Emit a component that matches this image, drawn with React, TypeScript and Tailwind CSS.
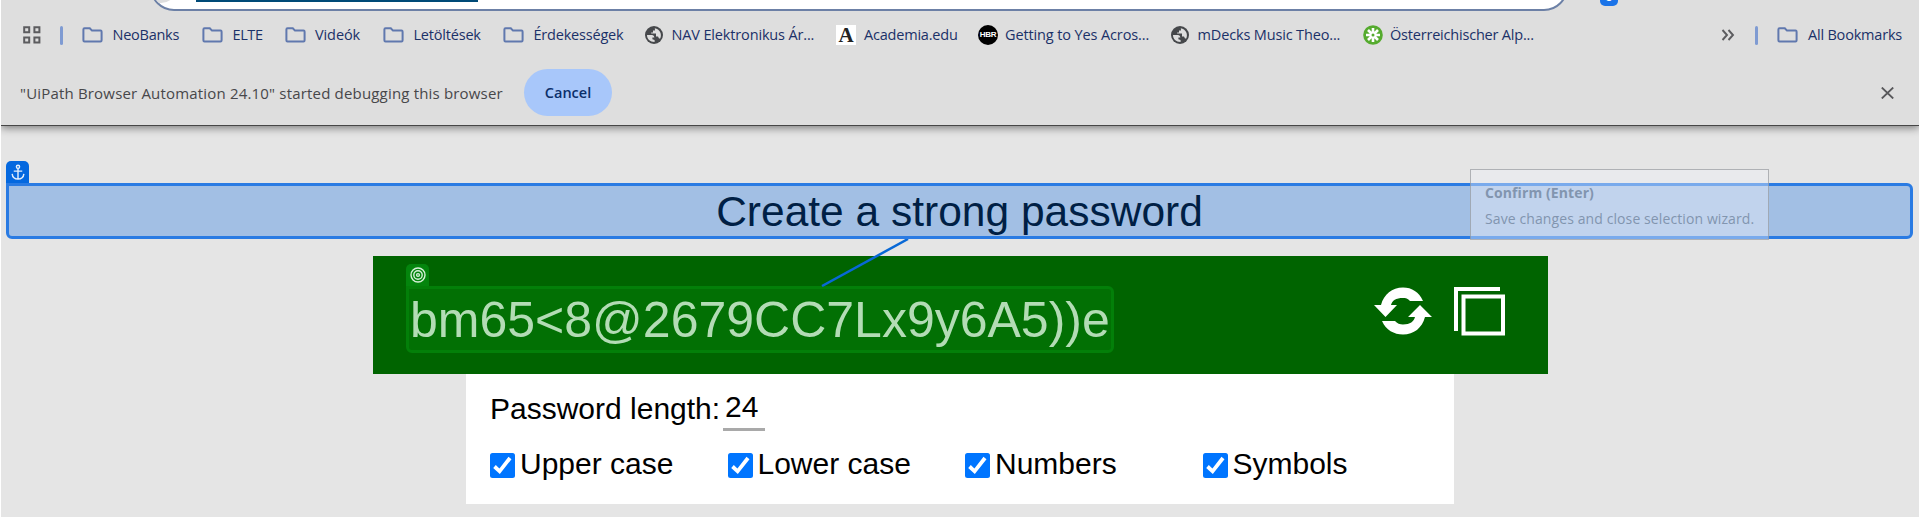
import React from "react";

const Folder = () => (
  <svg viewBox="0 0 21 16" className="h-4 w-[21px] shrink-0" fill="none" stroke="#6078ae" strokeWidth="2">
    <path d="M2.5 1.2H7.8L10 3.6H18.5Q19.6 3.6 19.6 4.7V13.2Q19.6 14.4 18.5 14.4H2.5Q1.4 14.4 1.4 13.2V2.4Q1.4 1.2 2.5 1.2Z" />
  </svg>
);

const Globe = () => (
  <svg viewBox="0 0 18 18" className="h-[18px] w-[18px] shrink-0">
    <circle cx="9" cy="9" r="9" fill="#46484b" />
    <path d="M2 9H7.2Q9.2 9 9.4 11.6H7.4V13.2L9.6 14V16C5 16 2 13 2 9Z" fill="#dedede" />
    <path d="M9.8 2.2L10 4.6H8V6.4H6.2V7.6H11V10.4H13L14 12.6H15.2C17.4 8 14.6 3 9.8 2.2Z" fill="#dedede" />
  </svg>
);

const Academia = () => (
  <span className="flex h-5 w-5 items-center justify-center bg-white font-['Liberation_Serif',serif] text-[21px] leading-5 font-bold text-[#222]">A</span>
);

const Hbr = () => (
  <span className="flex h-5 w-5 items-center justify-center rounded-full bg-black font-['Liberation_Sans',sans-serif] text-[8px] leading-5 font-bold tracking-[-0.3px] text-white">HBR</span>
);

const Alpine = () => (
  <svg viewBox="0 0 20 20" className="h-5 w-5">
    <circle cx="10" cy="10" r="9.8" fill="#55ab2e" />
    <path d="M10 3V17M3 10H17M5 5L15 15M15 5L5 15" stroke="#fff" strokeWidth="2.6" />
    <circle cx="10" cy="10" r="1.5" fill="#55ab2e" />
  </svg>
);

function Mark({ icon, box, label, children }: { icon: React.ReactNode; box: string; label: string; children: React.ReactNode }) {
  return (
    <div className={`flex shrink-0 items-center ${box}`}>
      {icon}
      <span className={`whitespace-nowrap ${label}`}>{children}</span>
    </div>
  );
}

function Check({ label }: { label: string }) {
  return (
    <label className="flex w-[237.5px] items-center">
      <svg viewBox="0 0 25 25" className="h-[25px] w-[25px]">
        <rect width="25" height="25" rx="2.5" fill="#0075ff" />
        <path d="M4.5 13.5L9.6 18.3L20 5" fill="none" stroke="#fff" strokeWidth="3.8" />
      </svg>
      <span className="-mt-1 ml-[5px] whitespace-nowrap">{label}</span>
    </label>
  );
}

export default function App() {
  return (
    <div className="relative flex h-[517px] w-[1920px] flex-col overflow-hidden border-x border-white bg-[#e5e5e5] font-['Liberation_Sans',Arial,sans-serif]">
      <header className="h-[126px] shrink-0 border-b border-[#464646] bg-[#dedede] font-['Open_Sans','Noto_Sans',sans-serif] text-[14.5px] text-[#1b3168] shadow-[0_2px_8px_#0007]">
        <div className="flex h-[11px] items-end">
          <div className="ml-[149px] flex h-12 w-[1418px] items-end overflow-hidden rounded-full border-2 border-[#6c80a6] bg-white">
            <div className="mb-[6px] -ml-[7px] h-8 w-8 rounded-full bg-[#dedede]" />
            <div className="mb-[7px] ml-[19px] h-5 w-[282px] bg-[#004a77]" />
          </div>
          <div className="mb-[5px] ml-8 flex h-5 w-[18px] items-end justify-center rounded-[5px] bg-[#1a73e8] text-[13px] leading-[19px] font-bold text-white">0</div>
        </div>
        <nav className="flex h-12 items-center">
          <svg viewBox="0 0 18 18" className="ml-[22px] h-[18px] w-[18px] shrink-0" fill="none" stroke="#5c5c5f" strokeWidth="2">
            <path d="M1.2 1.2H6.2V6.2H1.2ZM11.4 1.2H16.4V6.2H11.4ZM1.2 11.4H6.2V16.4H1.2ZM11.4 11.4H16.4V16.4H11.4Z" />
          </svg>
          <i className="ml-[19px] h-[19px] w-[3px] rounded bg-[#7f9bd2]" />
          <Mark icon={<Folder />} box="ml-[19px] w-[120px]" label="ml-[9.5px] tracking-[-0.25px]">NeoBanks</Mark>
          <Mark icon={<Folder />} box="w-[83px]" label="ml-[9.5px] tracking-[-0.4px]">ELTE</Mark>
          <Mark icon={<Folder />} box="w-[98px]" label="ml-[9px] tracking-[-0.1px]">Videók</Mark>
          <Mark icon={<Folder />} box="w-[120px]" label="ml-[9.5px] tracking-[-0.2px]">Letöltések</Mark>
          <Mark icon={<Folder />} box="w-[142px]" label="ml-[9.5px] tracking-[-0.2px]">Érdekességek</Mark>
          <Mark icon={<Globe />} box="w-[191px]" label="ml-[8.5px] tracking-[-0.15px]">NAV Elektronikus Ár...</Mark>
          <Mark icon={<Academia />} box="w-[142px]" label="ml-[8px] tracking-[-0.2px]">Academia.edu</Mark>
          <Mark icon={<Hbr />} box="w-[193px]" label="ml-[7px] tracking-[-0.12px]">Getting to Yes Acros...</Mark>
          <Mark icon={<Globe />} box="w-[192px]" label="ml-[8.5px] tracking-[-0.15px]">mDecks Music Theo...</Mark>
          <Mark icon={<Alpine />} box="w-[358px]" label="ml-[7px] tracking-[-0.2px]">Österreichischer Alp...</Mark>
          <svg viewBox="0 0 14 12" className="h-3 w-[14px] shrink-0" fill="none" stroke="#5c5c5f" strokeWidth="1.9">
            <path d="M1.5 1L6 6L1.5 11M7.5 1L12 6L7.5 11" />
          </svg>
          <i className="ml-5 h-[19px] w-[3px] rounded bg-[#7f9bd2]" />
          <Mark icon={<Folder />} box="ml-[19px]" label="ml-[10px] tracking-[-0.2px]">All Bookmarks</Mark>
        </nav>
        <div className="flex h-[66px] items-center text-[#47474a]">
          <span className="mt-[2px] ml-[19px] w-[504px] text-[15px] tracking-[0.18px] whitespace-nowrap">"UiPath Browser Automation 24.10" started debugging this browser</span>
          <button className="h-[47px] w-[88px] rounded-full bg-[#a8c7fa] pt-[2px] font-semibold text-[#0b2f6b]">Cancel</button>
          <svg viewBox="0 0 13 12" className="mt-px ml-[1269px] h-3 w-[13px] shrink-0" stroke="#58585b" strokeWidth="1.8">
            <path d="M.8 .5L12.2 11.5M12.2 .5L.8 11.5" />
          </svg>
        </div>
      </header>

      <main className="flex flex-col">
        <div className="mt-[35px] ml-[5px] flex h-[22px] w-[23px] items-center justify-center rounded-t-[5px] bg-[#0468df]">
          <svg viewBox="0 0 16 18" className="h-[17px] w-4" fill="none" stroke="#e2eefc" strokeWidth="1.5">
            <circle cx="8" cy="3" r="1.7" />
            <path d="M8 5V16M3.5 7.5H12.5M1.8 10.5Q2.4 16 8 16Q13.6 16 14.2 10.5" />
          </svg>
        </div>
        <h1 className="ml-[5px] flex h-[56px] w-[1907px] items-center justify-center rounded-md rounded-tl-none border-[3px] border-[#2a7be3] bg-[#a2bfe4] pt-[2px] text-[42.5px] whitespace-nowrap text-[#001f45]">Create a strong password</h1>
        <section className="mt-[17px] ml-[372px] flex h-[118px] w-[1175px] bg-[#006400]">
          <div className="ml-[33px] flex flex-col">
            <div className="mt-2 flex h-[22px] w-[23px] items-center justify-center rounded-t-[5px] bg-[#04850d]">
              <svg viewBox="0 0 16 16" className="h-4 w-4" fill="none" stroke="#d6f0d8" strokeWidth="1.4">
                <circle cx="8" cy="8" r="7" />
                <circle cx="8" cy="8" r="4.2" />
                <circle cx="8" cy="8" r="1.4" />
              </svg>
            </div>
            <div className="flex h-[67px] w-[708px] items-center rounded-md rounded-tl-none border-[3px] border-[#037f09] bg-[#027004] pt-[2px] pl-[1px] text-[50px] whitespace-nowrap text-[#b3dcb5]">{"bm65<8@2679CC7Lx9y6A5))e"}</div>
          </div>
          <svg viewBox="0 0 58 48" className="mt-[31px] ml-[260px] h-[48px] w-[58px]" fill="#fff">
            <path d="M7 18C10 7 18 0.5 29 0.5C38 0.5 45 5 49 14H36C34 11.5 31.5 11 29 11C22 11 18 13.5 17 18H23L11.5 30L0 18Z" />
            <path d="M51 30C48 41 40 47.5 29 47.5C20 47.5 12 43 8 34H21C23 36.5 26 37.5 29 37.5C36 37.5 40 34.5 41 30H34L46 18L58 30Z" />
          </svg>
          <svg viewBox="0 0 52 49" className="mt-[31px] ml-[22px] h-[49px] w-[52px]" fill="none" stroke="#fff" strokeWidth="4">
            <path d="M46 2H2V44" />
            <path d="M9.5 9.5H49V46.5H9.5Z" />
          </svg>
        </section>
        <section className="ml-[465px] h-[130px] w-[988px] bg-white pl-6 text-[30px] text-black">
          <div className="flex h-[57px] items-end">
            <span className="h-[45px] w-[233px] whitespace-nowrap">Password length:</span>
            <span className="h-[47px] w-[42px] border-b-[3px] border-[#a9a9a9] pl-[2px]">24</span>
          </div>
          <div className="mt-[14px] flex">
            <Check label="Upper case" />
            <Check label="Lower case" />
            <Check label="Numbers" />
            <Check label="Symbols" />
          </div>
        </section>
      </main>

      <svg viewBox="0 0 88 48" className="absolute top-[239px] left-[820px] h-12 w-[88px]">
        <path d="M1 47L87 0" stroke="#0868d6" strokeWidth="2.5" />
      </svg>
      <aside className="absolute top-[169px] left-[1469px] flex h-[71px] w-[299px] flex-col border border-[#8c8f95a0] bg-[#f1f3fa66] pt-[10px] pl-[14px] font-['Open_Sans',sans-serif] text-[14px] whitespace-nowrap text-[#8295af]">
        <b className="leading-[26px] tracking-[0.1px]">Confirm (Enter)</b>
        <span className="leading-[26px] tracking-[0.1px]">Save changes and close selection wizard.</span>
      </aside>
    </div>
  );
}
